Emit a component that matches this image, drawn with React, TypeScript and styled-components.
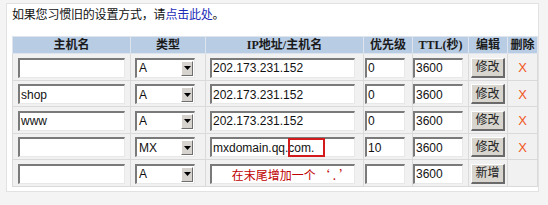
import React from "react";
import styled, { createGlobalStyle } from "styled-components";

const GlobalStyle = createGlobalStyle`
  html, body { margin: 0; padding: 0; background: #f4f4f4; }
  body { font-family: "Liberation Sans", "Noto Sans CJK SC", sans-serif; font-size: 12px; color: #000; }
`;

const Panel = styled.div`
  margin: 3px 0 0 6px;
  width: 533px;
  height: 189px;
  background: #fff;
  border: 1px solid #e2e2e2;
  padding: 0 0 0 5px;
  box-sizing: border-box;
`;

const Intro = styled.div`
  font-family: "Noto Sans CJK SC", sans-serif;
  font-size: 12px;
  line-height: 20px;
  color: #111;
  margin-bottom: 12px;
  letter-spacing: -0.2px;
`;

const Link = styled.a`
  color: #1a2bb8;
  text-decoration: none;
`;

const Table = styled.table`
  width: 525px;
  table-layout: fixed;
  border-collapse: collapse;
  border: 1px solid #d6d6d6;
`;

const Col = styled.col<{ $w: number }>`
  width: ${(p) => p.$w}px;
`;

const HeadCell = styled.th`
  height: 16px;
  padding: 0;
  background: #b8cce4;
  border: 1px solid #dde4ee;
  font-family: "Liberation Serif", "Noto Sans CJK SC", serif;
  font-weight: bold;
  font-size: 12px;
  color: #1a1a1a;
  text-align: center;
  line-height: 15px;
`;

const Row = styled.tr`
  height: 26.5px;
`;

const Cell = styled.td<{ $pl?: number; $center?: boolean }>`
  padding: 2px 0 0 ${(p) => p.$pl ?? 0}px;
  background: #f1f1f1;
  border: 1px solid #dadada;
  vertical-align: middle;
  text-align: ${(p) => (p.$center ? "center" : "left")};
  white-space: nowrap;
`;

const Field = styled.div<{ $w: number; $note?: boolean }>`
  display: flex;
  align-items: center;
  justify-content: ${(p) => (p.$note ? "center" : "flex-start")};
  width: ${(p) => p.$w}px;
  height: 20px;
  box-sizing: border-box;
  background: #fff;
  border-top: 2px solid #7a7a7a;
  border-left: 2px solid #7a7a7a;
  border-bottom: 1px solid #e8e8e8;
  border-right: 1px solid #e8e8e8;
  padding-left: ${(p) => (p.$note ? 20 : 1)}px;
  font-family: ${(p) => (p.$note ? `"Noto Sans CJK SC", sans-serif` : `"Liberation Sans", Arial, sans-serif`)};
  font-size: 12px;
  color: ${(p) => (p.$note ? "#c00000" : "#111")};
  position: relative;
  overflow: visible;
`;

const Quote = styled.span`
  letter-spacing: 3px;
  margin-left: 2px;
`;

const Select = styled.div`
  display: flex;
  align-items: stretch;
  width: 60px;
  height: 20px;
  box-sizing: border-box;
  background: #fff;
  border-top: 2px solid #7a7a7a;
  border-left: 2px solid #7a7a7a;
  border-bottom: 1px solid #e8e8e8;
  border-right: 1px solid #e8e8e8;
  font-family: "Liberation Sans", Arial, sans-serif;
  font-size: 12px;
  color: #111;
`;

const SelectValue = styled.span`
  flex: 1;
  display: flex;
  align-items: center;
  padding-left: 2px;
`;

const SelectArrow = styled.span`
  width: 12px;
  margin: 1px 1px 1px 0;
  box-sizing: border-box;
  background: #d6d3ce;
  border-top: 1px solid #fff;
  border-left: 1px solid #fff;
  border-right: 1px solid #6e6e6e;
  border-bottom: 1px solid #6e6e6e;
  display: flex;
  align-items: center;
  justify-content: center;
`;

const Button = styled.button`
  width: 34px;
  height: 20px;
  padding: 0 0 2px 0;
  box-sizing: border-box;
  background: #d8d5cf;
  border-top: 1px solid #fff;
  border-left: 1px solid #fff;
  border-right: 2px solid #6a6a6a;
  border-bottom: 2px solid #6a6a6a;
  font-family: "Noto Sans CJK SC", sans-serif;
  font-size: 12px;
  line-height: 14px;
  color: #222;
`;

const Del = styled.span`
  font-family: "Liberation Sans", Arial, sans-serif;
  font-size: 13px;
  color: #f0571c;
`;

const Mark = styled.span`
  position: absolute;
  left: 76px;
  top: -1px;
  width: 37px;
  height: 19px;
  box-sizing: border-box;
  border: 2px solid #d31b1b;
`;

type Rec = { name: string; type: string; ip: string; prio: string; ttl: string };

const rows: Rec[] = [
  { name: "", type: "A", ip: "202.173.231.152", prio: "0", ttl: "3600" },
  { name: "shop", type: "A", ip: "202.173.231.152", prio: "0", ttl: "3600" },
  { name: "www", type: "A", ip: "202.173.231.152", prio: "0", ttl: "3600" },
  { name: "", type: "MX", ip: "mxdomain.qq.com.", prio: "10", ttl: "3600" },
];

const Arrow = () => (
  <svg width="7" height="4" viewBox="0 0 7 4">
    <path d="M0 0h7L3.5 4z" fill="#000" />
  </svg>
);

const TypeSelect = ({ value }: { value: string }) => (
  <Select>
    <SelectValue>{value}</SelectValue>
    <SelectArrow>
      <Arrow />
    </SelectArrow>
  </Select>
);

export default function App() {
  return (
    <>
      <GlobalStyle />
      <Panel>
        <Intro>
          如果您习惯旧的设置方式，请<Link href="#">点击此处</Link>。
        </Intro>
        <Table>
          <colgroup>
            <Col $w={118} />
            <Col $w={75} />
            <Col $w={158} />
            <Col $w={49} />
            <Col $w={56} />
            <Col $w={39} />
            <Col $w={30} />
          </colgroup>
          <thead>
            <tr>
              <HeadCell>主机名</HeadCell>
              <HeadCell>类型</HeadCell>
              <HeadCell>IP地址/主机名</HeadCell>
              <HeadCell>优先级</HeadCell>
              <HeadCell>TTL(秒)</HeadCell>
              <HeadCell>编辑</HeadCell>
              <HeadCell>删除</HeadCell>
            </tr>
          </thead>
          <tbody>
            {rows.map((r, i) => (
              <Row key={i}>
                <Cell $pl={5}>
                  <Field $w={107}>{r.name}</Field>
                </Cell>
                <Cell $pl={4}>
                  <TypeSelect value={r.type} />
                </Cell>
                <Cell $pl={4}>
                  <Field $w={145}>
                    {r.ip}
                    {i === 3 && <Mark />}
                  </Field>
                </Cell>
                <Cell $pl={1}>
                  <Field $w={40}>{r.prio}</Field>
                </Cell>
                <Cell $pl={0}>
                  <Field $w={50}>{r.ttl}</Field>
                </Cell>
                <Cell $pl={2}>
                  <Button>修改</Button>
                </Cell>
                <Cell $center>
                  <Del>X</Del>
                </Cell>
              </Row>
            ))}
            <Row>
              <Cell $pl={5}>
                <Field $w={107} />
              </Cell>
              <Cell $pl={4}>
                <TypeSelect value="A" />
              </Cell>
              <Cell $pl={4}>
                <Field $w={145} $note>
                  在末尾增加一个<Quote>‘.’</Quote>
                </Field>
              </Cell>
              <Cell $pl={1}>
                <Field $w={40} />
              </Cell>
              <Cell $pl={0}>
                <Field $w={50}>3600</Field>
              </Cell>
              <Cell $pl={2}>
                <Button>新增</Button>
              </Cell>
              <Cell $center />
            </Row>
          </tbody>
        </Table>
      </Panel>
    </>
  );
}
